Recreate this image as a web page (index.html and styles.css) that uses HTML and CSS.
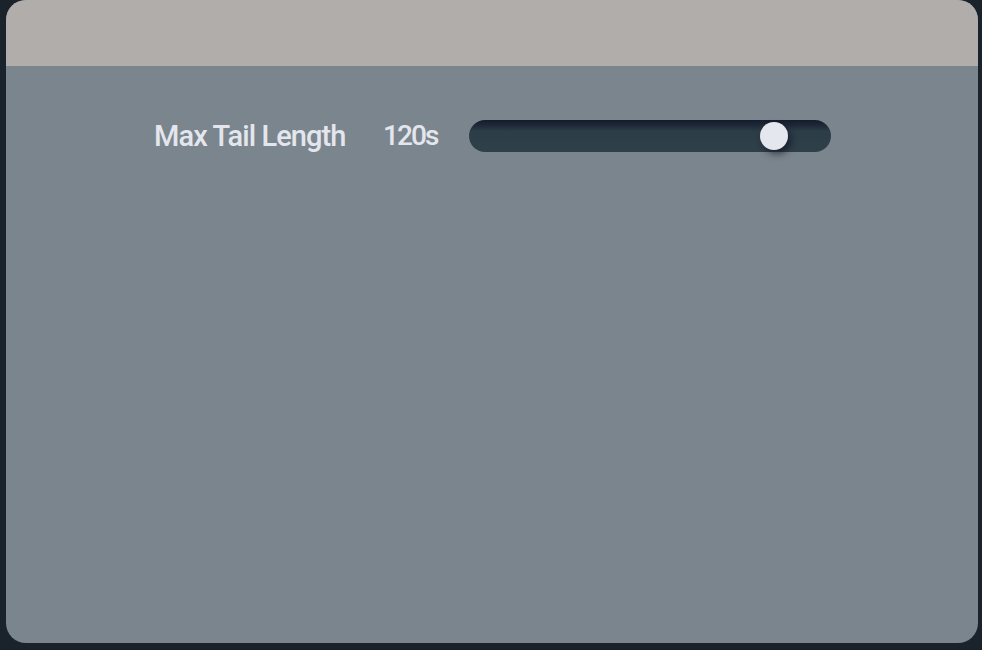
FILE: index.html
```html
<!DOCTYPE html>
<html>
<head>
<meta charset="utf-8">
<link rel="stylesheet" href="styles.css">
</head>
<body>
<div class="panel">
  <div class="panel-header"></div>
  <div class="panel-body">
    <div class="row">
      <span class="label">Max Tail Length</span>
      <span class="value">120s</span>
      <div class="slider">
        <div class="thumb"></div>
      </div>
    </div>
  </div>
</div>
</body>
</html>
```
FILE: styles.css
```css
html, body {
  margin: 0;
  padding: 0;
  height: 100%;
}
body {
  background: #1a222b;
  padding: 0 4px 7px 6px;
  box-sizing: border-box;
  font-family: "Roboto", "Liberation Sans", sans-serif;
}
.panel {
  height: 643px;
  border-radius: 20px;
  overflow: hidden;
  display: flex;
  flex-direction: column;
  background: #7b858d;
}
.panel-header {
  height: 66px;
  background: #b1adaa;
  flex: none;
}
.panel-body {
  flex: 1;
  padding: 54px 0 0 148px;
}
.row {
  display: flex;
  align-items: center;
  height: 32px;
}
.label, .value {
  color: #e3e6ed;
  font-weight: 500;
  line-height: 32px;
}
.label {
  width: 229px;
  font-size: 29px;
  letter-spacing: -0.9px;
}
.value {
  width: 86px;
  font-size: 28px;
  letter-spacing: -1.9px;
}
.slider {
  position: relative;
  width: 362px;
  height: 32px;
  border-radius: 16px;
  background: linear-gradient(to bottom, #141a2c 0%, #1f2a38 18%, #2c3d48 35%, #2f404a 100%);
}
.thumb {
  position: absolute;
  left: 291px;
  top: 2px;
  width: 28px;
  height: 28px;
  border-radius: 50%;
  background: #e5e7ee;
  box-shadow: 3px 4px 7px rgba(10, 15, 30, 0.6);
}
```
